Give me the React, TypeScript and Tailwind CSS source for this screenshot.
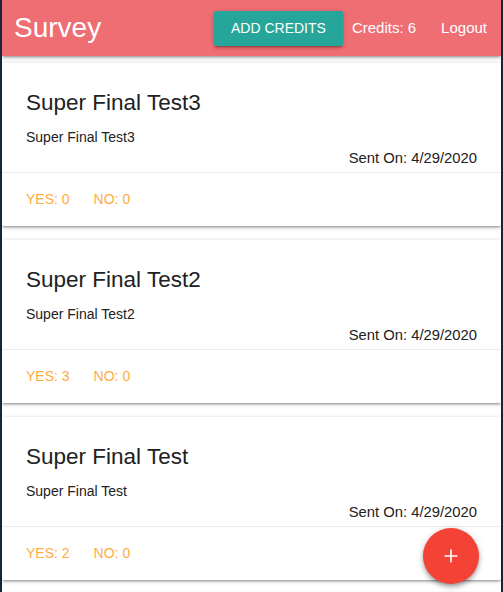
import { Plus } from "lucide-react";

const surveys = [
  { title: "Super Final Test3", body: "Super Final Test3", sent: "4/29/2020", yes: 0, no: 0 },
  { title: "Super Final Test2", body: "Super Final Test2", sent: "4/29/2020", yes: 3, no: 0 },
  { title: "Super Final Test", body: "Super Final Test", sent: "4/29/2020", yes: 2, no: 0 },
];

const cardShadow =
  "shadow-[0_2px_2px_0_rgba(0,0,0,0.14),0_3px_1px_-2px_rgba(0,0,0,0.12),0_1px_5px_0_rgba(0,0,0,0.2)]";

export default function App() {
  return (
    <div
      className="relative h-[592px] overflow-hidden bg-white border-x-2 border-[#18243f] text-[#212121]"
      style={{ fontFamily: '"Liberation Sans", Arial, sans-serif' }}
    >
      {/* nav bar */}
      <nav className="relative z-10 h-[56px] bg-[#ee6e73] flex items-center pl-[12px] pr-[14px] shadow-[0_2px_2px_0_rgba(0,0,0,0.14),0_3px_1px_-2px_rgba(0,0,0,0.12),0_1px_5px_0_rgba(0,0,0,0.2)]">
        <a className="text-white text-[28px] leading-none mr-auto">Survey</a>
        <button className={`h-[35px] px-[17px] mt-px rounded-[2px] bg-[#26a69a] text-white text-[14px] uppercase ${cardShadow}`}>
          Add Credits
        </button>
        <span className="ml-[9px] text-white text-[15px]">Credits: 6</span>
        <a className="ml-[25px] text-white text-[15px]">Logout</a>
      </nav>

      {/* survey cards */}
      <div className="flex flex-col gap-[14px] pt-[7px]">
        {surveys.map((s) => (
          <div key={s.title} className={`bg-white rounded-[2px] ${cardShadow}`}>
            <div className="relative p-[24px]">
              <span className="block text-[22.5px] leading-[32px] mb-[8px]">{s.title}</span>
              <p className="text-[14px] leading-[21px]">{s.body}</p>
              <p className="absolute right-[24px] top-[85px] text-[14.8px] leading-[21px]">
                Sent On: {s.sent}
              </p>
            </div>
            <div className="border-t border-[rgba(160,160,160,0.2)] px-[24px] py-[16px] flex text-[14px] leading-[21px] text-[#ffab40] uppercase">
              <a className="mr-[24px]">Yes: {s.yes}</a>
              <a>No: {s.no}</a>
            </div>
          </div>
        ))}
        {/* next card, scrolled just below the fold */}
        <div className={`h-[163px] bg-white rounded-[2px] ${cardShadow}`} />
      </div>

      {/* floating add button */}
      <button className="absolute right-[22px] bottom-[8px] w-[56px] h-[56px] rounded-full bg-[#f44336] text-white flex items-center justify-center shadow-[0_4px_5px_0_rgba(0,0,0,0.14),0_1px_10px_0_rgba(0,0,0,0.12),0_2px_4px_-1px_rgba(0,0,0,0.3)]">
        <Plus size={20} strokeWidth={2} />
      </button>
    </div>
  );
}
